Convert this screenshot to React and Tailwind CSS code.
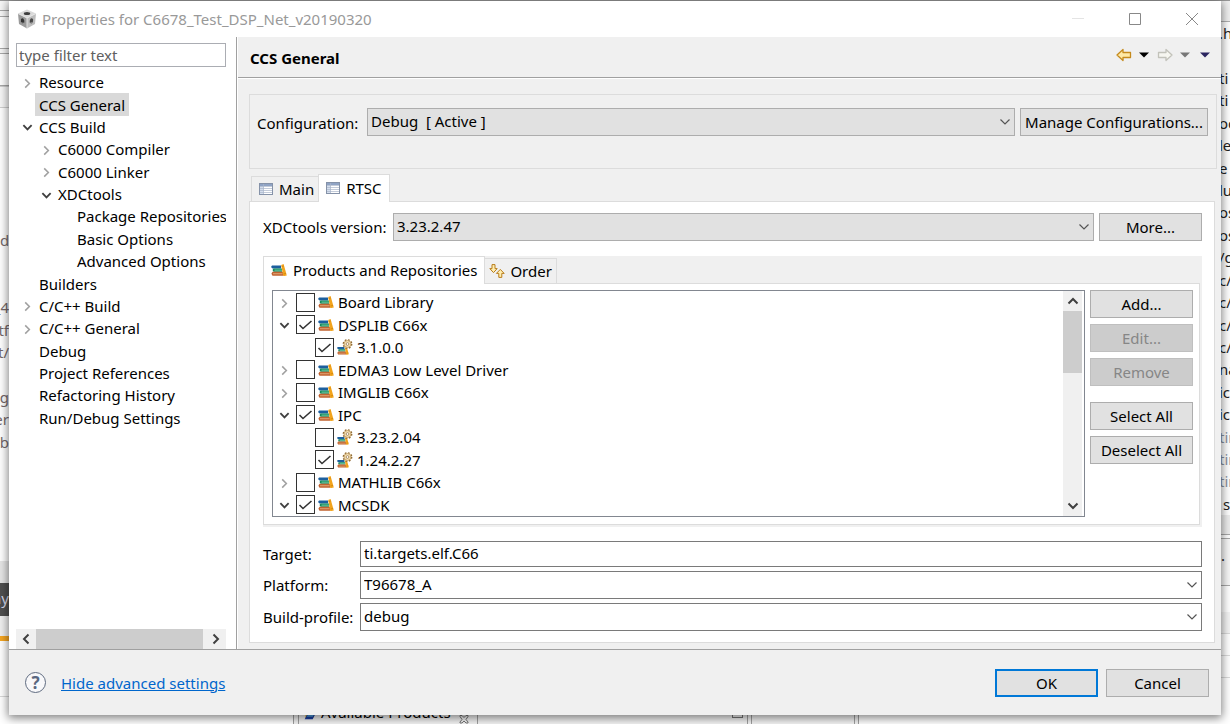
import clsx from 'clsx'

const NAV = [
  { label: 'Resource', level: 0, state: 'closed' },
  { label: 'CCS General', level: 0, selected: true },
  { label: 'CCS Build', level: 0, state: 'open' },
  { label: 'C6000 Compiler', level: 1, state: 'closed' },
  { label: 'C6000 Linker', level: 1, state: 'closed' },
  { label: 'XDCtools', level: 1, state: 'open' },
  { label: 'Package Repositories', level: 2 },
  { label: 'Basic Options', level: 2 },
  { label: 'Advanced Options', level: 2 },
  { label: 'Builders', level: 0 },
  { label: 'C/C++ Build', level: 0, state: 'closed' },
  { label: 'C/C++ General', level: 0, state: 'closed' },
  { label: 'Debug', level: 0 },
  { label: 'Project References', level: 0 },
  { label: 'Refactoring History', level: 0 },
  { label: 'Run/Debug Settings', level: 0 },
]

const PRODUCTS = [
  { label: 'Board Library', state: 'closed' },
  { label: 'DSPLIB C66x', state: 'open', checked: true },
  { label: '3.1.0.0', child: true, checked: true },
  { label: 'EDMA3 Low Level Driver', state: 'closed' },
  { label: 'IMGLIB C66x', state: 'closed' },
  { label: 'IPC', state: 'open', checked: true },
  { label: '3.23.2.04', child: true },
  { label: '1.24.2.27', child: true, checked: true },
  { label: 'MATHLIB C66x', state: 'closed' },
  { label: 'MCSDK', state: 'open', checked: true },
]

const LEVEL_PAD = ['pl-1', 'pl-[23px]', 'pl-[42px]']

// slices of the editor window behind the dialog
const LEFT_LINES = ['de', '', '', '_4', 'tf', 't/', '', 'ng', 'er', 'lib']
const RIGHT_LINES = [
  '.h', '', 'ti', 'ti', 'oc', 'le', 'e', 'lu', 'os', 'os', '/g',
  'c/', 'c/', 'c/', 'c/', 'na', 'ic', 'ic', 'tin', 'tin', 'tin', ' s',
]

function Chevron({ dir = 'down', className }) {
  const paths = {
    down: 'M1.5 3.5 6 8l4.5-4.5',
    up: 'M1.5 8.5 6 4l4.5 4.5',
    left: 'M8.5 1.5 4 6l4.5 4.5',
    right: 'M3.5 1.5 8 6l-4.5 4.5',
  }
  return (
    <svg viewBox="0 0 12 12" fill="none" stroke="currentColor" className={clsx('shrink-0', className)} aria-hidden="true">
      <path d={paths[dir]} />
    </svg>
  )
}

function Twisty({ state }) {
  return (
    <span className="flex w-[14px] shrink-0 items-center justify-center pt-0.5">
      {state === 'closed' && <Chevron dir="right" className="h-[11px] w-[11px] stroke-[1.7] text-[#a0a0a0]" />}
      {state === 'open' && <Chevron className="h-[11px] w-[11px] stroke-2 text-[#404040]" />}
    </span>
  )
}

function CubeIcon() {
  return (
    <svg viewBox="0 0 20 20" className="h-5 w-5" aria-hidden="true">
      <path d="M10 .5 19 4.500 10 9 1 4.500Z" fill="#d9d9d9" />
      <path d="M1 4.500 10 9v10.500L2 15Z" fill="#9a9a9a" />
      <path d="M19 4.500 10 9v10.500L18 15Z" fill="#bdbdbd" />
      <path d="M1 4.500 10 9l9-4.500M10 9v10.500" fill="none" stroke="#e8e8e8" strokeWidth=".9" />
      <ellipse cx="10" cy="4.600" rx="3.200" ry="1.500" fill="#3d3d3d" />
      <ellipse cx="5.600" cy="11.800" rx="1.700" ry="2.600" fill="#333" transform="rotate(-14 5.600 11.800)" />
      <ellipse cx="14.400" cy="11.800" rx="1.700" ry="2.600" fill="#4a4a4a" transform="rotate(14 14.400 11.800)" />
      <path d="M4.600 13.200a1.700 2 0 0 0 2.200.8M13.400 13.800a1.700 2 0 0 0 2-.8" stroke="#aaa" strokeWidth=".8" fill="none" />
    </svg>
  )
}

function TableIcon() {
  return (
    <svg viewBox="0 0 14 12" className="h-3 w-[14px] shrink-0" aria-hidden="true">
      <rect x=".5" y=".5" width="13" height="11" fill="#fff" stroke="#8592a8" />
      <path d="M1 1h12v2H1z" fill="#8fa3c4" />
      <path d="M1 3h3.5v8H1z" fill="#d5dfee" />
      <path d="M1 3.5h12M1 5.5h12M1 7.5h12M1 9.5h12M4.5 1v10" stroke="#a9b5c9" strokeWidth=".7" />
    </svg>
  )
}

function Books() {
  return (
    <>
      <path d="M1 2.500h9v3H1.500L0 4Z" fill="#1c5f9e" />
      <path d="M2.500 5.500H11v3.300H2.500L1.500 7Z" fill="#138a5c" />
      <path d="M3.500 6.700H11v.8H3.500z" fill="#8fdcb8" />
      <path d="M1.500 8.800H12v4H1.500L.4 10.800Z" fill="#c0622f" />
      <path d="M2 10.400h9.500v.8H2z" fill="#eab98c" />
      <path d="M10.200 2 12.600 1l3.200 11.400-2.400.6h-1.200Z" fill="#f2a41d" />
      <path d="m10.700 3.600 2-.6M12.700 11l2.400-.7" stroke="#c47a08" strokeWidth=".6" />
    </>
  )
}

function BooksIcon() {
  return (
    <svg viewBox="0 0 16 14" className="h-[14px] w-4 shrink-0" aria-hidden="true">
      <Books />
    </svg>
  )
}

function VersionIcon() {
  return (
    <svg viewBox="0 0 16 16" className="h-4 w-4 shrink-0" aria-hidden="true">
      <g transform="translate(0 6) scale(.75)">
        <Books />
      </g>
      <circle cx="10.500" cy="5" r="4.200" fill="#f7e6c0" stroke="#8f6a35" strokeWidth="1.400" strokeDasharray="1.700 1.600" />
      <circle cx="10.500" cy="5" r="3.400" fill="#f7e3b5" stroke="#a98147" strokeWidth=".6" />
      <circle cx="10.500" cy="5" r="1.400" fill="#fff" stroke="#8f6a35" strokeWidth=".7" />
    </svg>
  )
}

function OrderIcon() {
  return (
    <svg viewBox="0 0 16 14" className="h-[14px] w-4 shrink-0" fill="#ffeeb0" stroke="#b87d1c" strokeLinejoin="round" aria-hidden="true">
      <path d="M3 .6h3v4h2.200L4.500 8.600.8 4.600H3Z" />
      <path d="M9.800 13.400h3V9.400h2.400L11.300 5.400 7.400 9.400h2.400Z" />
    </svg>
  )
}

function Button({ children, primary, className, ...props }) {
  return (
    <button
      type="button"
      className={clsx(
        'flex h-7 shrink-0 items-center justify-center bg-[#e1e1e1] whitespace-nowrap disabled:border-[#bfbfbf] disabled:bg-[#cccccc] disabled:text-[#868686]',
        primary ? 'border-2 border-[#0078d7]' : 'border border-[#adadad]',
        className,
      )}
      {...props}
    >
      {children}
    </button>
  )
}

function Select({ id, value, className }) {
  return (
    <div className="relative min-w-0 flex-1">
      <select id={id} className={clsx('block h-7 w-full appearance-none rounded-none border pr-6 pb-0.5 pl-[3px] outline-none', className)}>
        <option>{value}</option>
      </select>
      <Chevron className="pointer-events-none absolute top-2 right-1 h-3 w-3 stroke-[1.2] text-[#555]" />
    </div>
  )
}

function NavTree() {
  return (
    <ul className="mt-1 grid h-[358px] auto-rows-fr overflow-hidden">
      {NAV.map((item) => (
        <li key={item.label} className={clsx('flex items-stretch whitespace-nowrap', LEVEL_PAD[item.level])}>
          <Twisty state={item.state} />
          <span className={clsx('ml-px flex items-center px-1', item.selected && 'bg-[#d9d9d9]')}>{item.label}</span>
        </li>
      ))}
    </ul>
  )
}

function Sidebar() {
  return (
    <aside className="flex w-[228px] shrink-0 flex-col border-r border-[#a0a0a0] bg-white pt-[6px] pr-[10px] pl-[7px]">
      <input
        aria-label="Filter"
        placeholder="type filter text"
        className="h-6 w-full shrink-0 border border-[#abadb3] px-0.5 outline-none placeholder:text-[#606060]"
      />
      <NavTree />
      <div className="mt-auto flex h-5 bg-[#f0f0f0] text-[#404040]">
        <button type="button" aria-label="Scroll left" className="flex w-5 items-center justify-center">
          <Chevron dir="left" className="h-3 w-3 stroke-2" />
        </button>
        <div className="flex flex-1">
          <div className="w-[167px] bg-[#cdcdcd]" />
        </div>
        <button type="button" aria-label="Scroll right" className="flex w-5 items-center justify-center">
          <Chevron dir="right" className="h-3 w-3 stroke-2" />
        </button>
      </div>
    </aside>
  )
}

function ProductRow({ item }) {
  return (
    <li className={clsx('flex items-center whitespace-nowrap', item.child ? 'pl-[23px]' : 'pl-1')}>
      <Twisty state={item.state} />
      <label className="ml-[5px] flex items-center">
        <span className="relative mr-[3px] block h-[19px] w-[19px]">
          <input
            type="checkbox"
            defaultChecked={item.checked}
            className="peer block h-[19px] w-[19px] appearance-none border border-[#333] bg-white"
          />
          <svg viewBox="0 0 19 19" className="pointer-events-none absolute inset-0 hidden fill-none stroke-[#333] stroke-[1.6] peer-checked:block" aria-hidden="true">
            <path d="m3.500 10 3.500 3.500 8.500-7.500" />
          </svg>
        </span>
        {item.child ? <VersionIcon /> : <BooksIcon />}
        <span className="ml-1">{item.label}</span>
      </label>
    </li>
  )
}

function ProductTree() {
  return (
    <div className="flex min-w-0 flex-1 border border-[#828790] bg-white">
      <ul className="grid h-[225px] min-w-0 flex-1 auto-rows-fr">
        {PRODUCTS.map((item) => (
          <ProductRow key={item.label} item={item} />
        ))}
      </ul>
      <div className="mr-0.5 flex w-[19px] flex-col bg-[#f0f0f0] text-[#404040]">
        <button type="button" aria-label="Scroll up" className="flex h-5 items-center justify-center">
          <Chevron dir="up" className="h-3 w-3 stroke-2" />
        </button>
        <div className="flex-1">
          <div className="h-[62px] bg-[#cdcdcd]" />
        </div>
        <button type="button" aria-label="Scroll down" className="flex h-5 items-center justify-center">
          <Chevron className="h-3 w-3 stroke-2" />
        </button>
      </div>
    </div>
  )
}

function Products() {
  return (
    <section className="mt-[15px] bg-[#f0f0f0] pr-0.5 pb-0.5">
      <div className="flex h-[27px] items-end">
        <button type="button" className="relative -mb-px flex h-7 items-center gap-1.5 border border-b-0 border-[#dcdcdc] bg-white px-[7px] pb-0.5 whitespace-nowrap">
          <BooksIcon />
          Products and Repositories
        </button>
        <button type="button" className="flex h-[25px] items-center gap-[5px] border border-b-0 border-l-0 border-[#dcdcdc] px-1 whitespace-nowrap">
          <OrderIcon />
          Order
        </button>
      </div>
      <div className="flex gap-[5px] border border-[#dcdcdc] bg-white pt-[6px] pr-[6px] pb-[7px] pl-2">
        <ProductTree />
        <div className="flex w-[103px] shrink-0 flex-col gap-[6px]">
          <Button>Add...</Button>
          <Button disabled>Edit...</Button>
          <Button disabled>Remove</Button>
          <Button className="mt-[10px]">Select All</Button>
          <Button>Deselect All</Button>
        </div>
      </div>
    </section>
  )
}

function PageHeader() {
  return (
    <header className="flex h-[41px] items-center justify-between border-b border-[#a0a0a0] pr-[11px] pl-3">
      <h1 className="pt-0.5 font-bold">CCS General</h1>
      <div className="flex items-center pb-1">
        <button type="button" aria-label="Back" className="mr-[7px]">
          <svg viewBox="0 0 16 14" className="h-[14px] w-4" fill="#ffe9a6" stroke="#c58a1c" strokeWidth="1.300" strokeLinejoin="round">
            <path d="M1 7 7 1.500v3h7.500v5H7v3Z" />
          </svg>
        </button>
        <button type="button" aria-label="Back history" className="mr-2">
          <svg viewBox="0 0 10 6" className="h-[6px] w-[10px]" fill="#000">
            <path d="M0 .5h10L5 5.500Z" />
          </svg>
        </button>
        <button type="button" aria-label="Forward" className="mr-[7px]">
          <svg viewBox="0 0 16 14" className="h-[14px] w-4" fill="#f6f6f0" stroke="#c2c2ba" strokeWidth="1.300" strokeLinejoin="round">
            <path d="M15 7 9 1.500v3H1.500v5H9v3Z" />
          </svg>
        </button>
        <button type="button" aria-label="Forward history" className="mr-[10px]">
          <svg viewBox="0 0 10 6" className="h-[6px] w-[10px]" fill="#777">
            <path d="M0 .5h10L5 5.500Z" />
          </svg>
        </button>
        <button type="button" aria-label="View menu">
          <svg viewBox="0 0 10 6" className="h-[6px] w-[10px]" fill="#2b2560">
            <path d="M0 .5h10L5 5.500Z" />
          </svg>
        </button>
      </div>
    </header>
  )
}

function RtscPanel() {
  return (
    <div className="border border-[#dcdcdc] bg-white pt-[11px] pr-3 pb-[11px] pl-[13px]">
      <div className="flex items-center">
        <label htmlFor="xdc" className="w-[130px] shrink-0 whitespace-nowrap">XDCtools version:</label>
        <Select id="xdc" value="3.23.2.47" className="border-[#adadad] bg-[#e1e1e1]" />
        <Button className="ml-[5px] w-[103px]">More...</Button>
      </div>
      <Products />
      <div className="mt-[14px] flex flex-col gap-1">
        <div className="flex items-center">
          <label htmlFor="target" className="w-[97px] shrink-0">Target:</label>
          <input id="target" defaultValue="ti.targets.elf.C66" className="h-[26px] min-w-0 flex-1 border border-[#7a7a7a] px-[3px] pb-0.5 outline-none" />
        </div>
        <div className="flex items-center">
          <label htmlFor="platform" className="w-[97px] shrink-0">Platform:</label>
          <Select id="platform" value="T96678_A" className="border-[#7a7a7a] bg-white" />
        </div>
        <div className="flex items-center">
          <label htmlFor="profile" className="w-[97px] shrink-0 whitespace-nowrap">Build-profile:</label>
          <Select id="profile" value="debug" className="border-[#7a7a7a] bg-white" />
        </div>
      </div>
    </div>
  )
}

function Content() {
  return (
    <main className="flex min-w-0 flex-1 flex-col border-l border-white bg-[#f0f0f0]">
      <PageHeader />
      <div className="border-t border-white pt-[15px] pr-1 pb-[6px] pl-[11px]">
        <div className="flex h-[75px] items-start border border-[#dcdcdc] pt-[13px] pr-2 pl-[7px]">
          <label htmlFor="config" className="w-[110px] shrink-0 pt-[5px] whitespace-nowrap">Configuration:</label>
          <Select id="config" value={'Debug\u00a0 [ Active ]'} className="border-[#adadad] bg-[#e1e1e1]" />
          <Button className="ml-[5px] w-[188px]">Manage Configurations...</Button>
        </div>
        <div className="mt-[5px] pr-0.5">
          <div className="flex items-end pl-0.5">
            <button type="button" className="flex h-[25px] items-center gap-[6px] border border-r-0 border-b-0 border-[#dcdcdc] pr-[4px] pl-[7px]">
              <TableIcon />
              Main
            </button>
            <button type="button" className="relative -mb-px flex h-7 items-center gap-[6px] border border-b-0 border-[#dcdcdc] bg-white px-[7px] pb-0.5">
              <TableIcon />
              RTSC
            </button>
          </div>
          <RtscPanel />
        </div>
      </div>
    </main>
  )
}

function TitleBar() {
  return (
    <div className="flex h-9 shrink-0 items-center bg-white pr-px pb-px pl-2 text-[#999]">
      <CubeIcon />
      <span className="ml-[5px] flex-1 truncate">Properties for C6678_Test_DSP_Net_v20190320</span>
      <button type="button" aria-label="Minimize" className="flex w-[57px] justify-center">
        <svg viewBox="0 0 12 12" className="h-3 w-3" stroke="#e4e4e4"><path d="M0 5.500h12" /></svg>
      </button>
      <button type="button" aria-label="Maximize" className="flex w-[57px] justify-center">
        <svg viewBox="0 0 12 12" className="h-3 w-3" fill="none" stroke="#888"><path d="M.5.5h11v11H.5z" /></svg>
      </button>
      <button type="button" aria-label="Close" className="flex w-[57px] justify-center">
        <svg viewBox="0 0 12 12" className="h-3 w-3" stroke="#888"><path d="m0 0 12 12M12 0 0 12" /></svg>
      </button>
    </div>
  )
}

function Footer() {
  return (
    <footer className="flex h-[66px] shrink-0 items-center border-t border-[#a0a0a0] bg-[#f0f0f0] pr-3 pl-4">
      <button type="button" aria-label="Help" className="flex h-[21px] w-[21px] items-center justify-center rounded-full border border-[#5f6b80] bg-[#f8f8fa] text-[17px] leading-none font-bold text-[#5a6780]">
        ?
      </button>
      <a href="#advanced" className="ml-[15px] text-[#0066cc] underline">Hide advanced settings</a>
      <div className="ml-auto flex gap-2">
        <Button primary className="w-[103px]">OK</Button>
        <Button className="w-[103px]">Cancel</Button>
      </div>
    </footer>
  )
}

function LeftStrip() {
  return (
    <div className="flex w-[9px] shrink-0 flex-col overflow-hidden bg-[#f7f7f7] text-[#75696a]">
      <div className="h-[10px] border-b border-[#a8a8a8]" />
      <div className="h-[6px] border-b border-[#a8a8a8]" />
      <div className="h-8 border-b border-[#a8a8a8] bg-white" />
      <div className="h-[5px] border-b border-[#a8a8a8]" />
      <div className="h-8 border-b border-[#a8a8a8] bg-white" />
      <div className="h-[22px] border-y border-[#cfcfcf]" />
      <div className="h-[121px] bg-white" />
      <div className="grid h-[224px] auto-rows-fr grid-cols-1 bg-white">
        {LEFT_LINES.map((text, i) => (
          <span key={i} className={clsx('flex items-center', text !== 'de' && 'justify-end')}>{text}</span>
        ))}
      </div>
      <div className="flex-1 bg-white" />
      <div className="h-[22px] bg-[#e6e6e6]" />
      <div className="flex h-[33px] items-center justify-end bg-[#505050] pb-1 text-[#d8d8e8]">ny</div>
      <div className="h-5 bg-[#f0f0f0]" />
      <div className="h-[5px] bg-[#f5a623]" />
      <div className="h-14 border-b border-[#d8d8d8] bg-white" />
      <div className="h-[18px] bg-white" />
    </div>
  )
}

function RightStrip() {
  return (
    <div className="flex w-[9px] shrink-0 flex-col overflow-hidden bg-white text-[#222]">
      <div className="h-[21px] border-b border-[#b0b0b0] bg-[#f0f0f0]" />
      <div className="-ml-0.5 grid h-[493px] auto-rows-fr">
        {RIGHT_LINES.map((text, i) => (
          <span key={i} className={clsx('flex items-center whitespace-pre', text === 'tin' && 'text-[#8a93a3]')}>{text}</span>
        ))}
      </div>
      <div className="h-5 border-b border-[#a8a8a8] bg-[#ededed]" />
      <div className="h-1 border-b border-[#a8a8a8]" />
      <div className="h-[47px] border-b border-[#a8a8a8] bg-[#f7f7f7] leading-8">.</div>
      <div className="h-[26px] bg-white" />
      <div className="h-[22px] border-b border-[#dadada] bg-[#f4f4f4]" />
      <div className="h-[22px] border-b border-[#dadada]" />
      <div className="h-[22px] border-b border-[#dadada]" />
      <div className="flex-1" />
    </div>
  )
}

function BottomStrip() {
  return (
    <div className="flex h-[9px] shrink-0 items-end overflow-hidden bg-[#f4f4f4]">
      <div className="h-full w-[294px] border-r border-[#a0a0a0] bg-white" />
      <div className="ml-1 flex h-full w-[180px] shrink-0 items-end overflow-hidden border-x border-[#a0a0a0]">
        <svg viewBox="0 0 16 12" className="ml-[3px] h-3 w-4 shrink-0 self-end pb-1" aria-hidden="true">
          <path d="M1 1h12v8H1z" fill="#f0c755" />
          <path d="M4 3h12l-4 8H0Z" fill="#1c3fa0" />
          <path d="M5 4h9l-2 3H3Z" fill="#4f9fe0" />
        </svg>
        <span className="ml-[3px] leading-6 whitespace-nowrap">Available Products</span>
        <svg viewBox="0 0 10 10" className="ml-2 h-[10px] w-[10px] shrink-0 self-center" fill="none" stroke="#777" aria-hidden="true">
          <path d="M1 .5h2l2 2 2-2h2v1L7 4.500 9 7v1H7L5 6 3 8H1V7l2-2.500L1 1.500Z" />
        </svg>
      </div>
      <div className="flex h-full w-[270px] items-start justify-end border-r border-[#a0a0a0] pr-1">
        <div className="h-[3px] w-[11px] border border-t-0 border-[#777]" />
      </div>
      <div className="h-full w-1 border-r border-[#a0a0a0]" />
      <div className="h-full w-[103px] border-r border-[#a0a0a0]" />
      <div className="h-full w-1 border-r border-[#a0a0a0]" />
      <div className="h-full flex-1 bg-white" />
    </div>
  )
}

export default function App() {
  return (
    <div className="flex min-h-screen flex-col overflow-hidden bg-white font-['Noto_Sans','Open_Sans',sans-serif] text-[15px] leading-5 text-black">
      <div className="h-px shrink-0 bg-[#999]" />
      <div className="flex flex-1">
        <LeftStrip />
        <div role="dialog" aria-label="Properties" className="relative z-10 flex min-w-0 flex-1 flex-col shadow-[0_2px_9px_1px_rgba(0,0,0,0.5)]">
          <TitleBar />
          <div className="flex flex-1">
            <Sidebar />
            <Content />
          </div>
          <Footer />
        </div>
        <RightStrip />
      </div>
      <BottomStrip />
    </div>
  )
}
